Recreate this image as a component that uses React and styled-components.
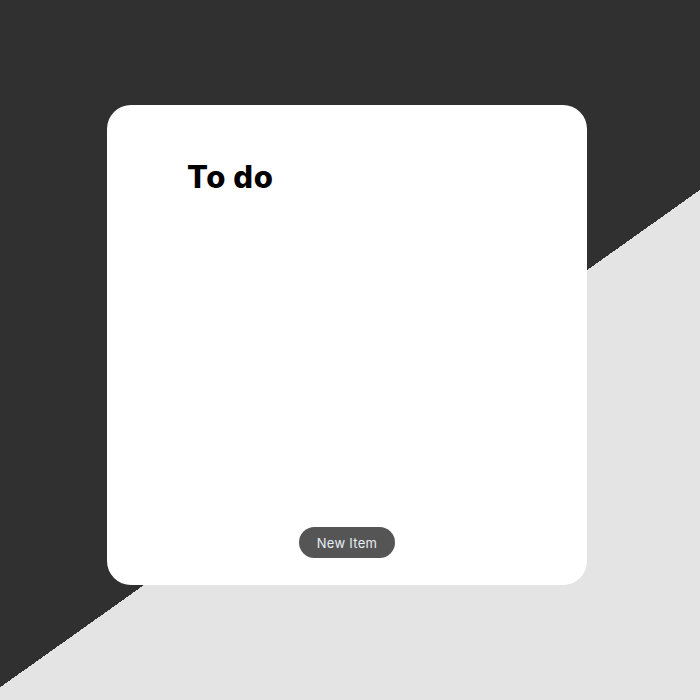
import React from "react";
import styled, { createGlobalStyle } from "styled-components";

const GlobalStyle = createGlobalStyle`
  html, body {
    margin: 0;
    padding: 0;
  }
  body {
    min-height: 100vh;
    background: linear-gradient(144.6deg, #303030 57.4%, #e4e4e4 57.4%);
    font-family: Inter, "Liberation Sans", sans-serif;
  }
`;

const App = () => {
  return (
    <>
      <GlobalStyle />
      <Page>
        <Card>
          <Title>To do</Title>
          <List />
          <NewButton>New Item</NewButton>
        </Card>
      </Page>
    </>
  );
};

export default App;

const Page = styled.div`
  min-height: 100vh;
  box-sizing: border-box;
  padding: 105px 0 0 107px;
`;

const Card = styled.div`
  width: 480px;
  height: 480px;
  box-sizing: border-box;
  background: #fff;
  border-radius: 24px;
  display: flex;
  flex-direction: column;
  padding: 52px 0 27px 80px;
`;

const Title = styled.h1`
  margin: 0;
  font-family: Inter, "DejaVu Sans", sans-serif;
  font-weight: 800;
  font-size: 31px;
  letter-spacing: 0.6px;
  line-height: 40px;
  color: #000;
`;

const List = styled.div`
  flex: 1;
`;

const NewButton = styled.button`
  align-self: center;
  margin-left: -80px;
  width: 96px;
  height: 31px;
  padding: 0;
  border: none;
  border-radius: 16px;
  background: #555555;
  color: #e6eef5;
  font-family: Inter, "Liberation Sans", sans-serif;
  font-size: 13px;
  letter-spacing: 0.3px;
  cursor: pointer;
`;
